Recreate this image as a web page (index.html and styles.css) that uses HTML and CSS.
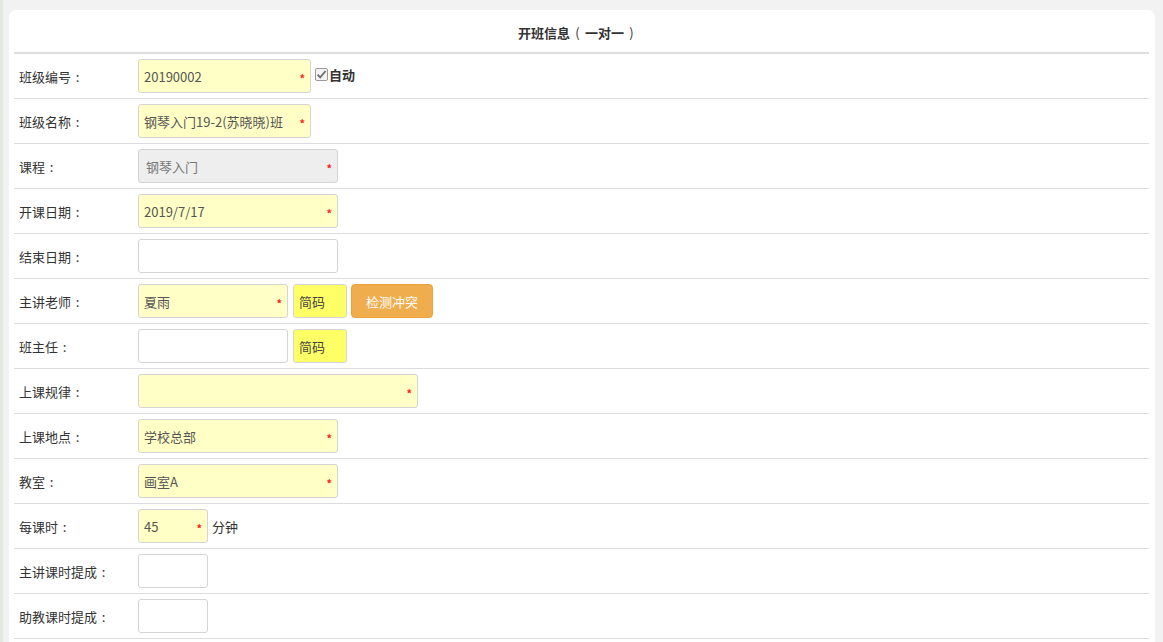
FILE: index.html
```html
<!DOCTYPE html>
<html lang="zh">
<head>
<meta charset="utf-8">
<title>开班信息</title>
<link rel="stylesheet" href="styles.css">
</head>
<body>
<div class="page">
  <div class="card">
    <div class="title">开班信息<span class="p">(</span>一对一<span class="p">)</span></div>

    <div class="row">
      <div class="label">班级编号<span class="p">:</span></div>
      <div class="wrap w173"><input class="field yellow" value="20190002"><span class="req">*</span></div>
      <span class="chk"><svg width="13" height="13" viewBox="0 0 13 13"><rect x="0.5" y="0.5" width="12" height="12" rx="1.5" fill="#f4f4f4" stroke="#9a9a9a"/><path d="M2.6 6.6 L5.2 9.3 L10.6 3" fill="none" stroke="#6f6f6f" stroke-width="1.8"/></svg><b>自动</b></span>
    </div>

    <div class="row">
      <div class="label">班级名称<span class="p">:</span></div>
      <div class="wrap w173"><input class="field yellow" value="钢琴入门19-2(苏晓晓)班"><span class="req">*</span></div>
    </div>

    <div class="row">
      <div class="label">课程<span class="p">:</span></div>
      <div class="wrap w200"><input class="field disabled" value="钢琴入门" disabled><span class="req">*</span></div>
    </div>

    <div class="row">
      <div class="label">开课日期<span class="p">:</span></div>
      <div class="wrap w200"><input class="field yellow" value="2019/7/17"><span class="req">*</span></div>
    </div>

    <div class="row">
      <div class="label">结束日期<span class="p">:</span></div>
      <div class="wrap w200"><input class="field" value=""></div>
    </div>

    <div class="row">
      <div class="label">主讲老师<span class="p">:</span></div>
      <div class="wrap w150"><input class="field yellow" value="夏雨"><span class="req">*</span></div>
      <div class="wrap w54 ml5"><input class="field code" value="简码"></div>
      <button class="btn">检测冲突</button>
    </div>

    <div class="row">
      <div class="label">班主任<span class="p">:</span></div>
      <div class="wrap w150"><input class="field" value=""></div>
      <div class="wrap w54 ml5"><input class="field code" value="简码"></div>
    </div>

    <div class="row">
      <div class="label">上课规律<span class="p">:</span></div>
      <div class="wrap w280"><input class="field yellow" value=""><span class="req">*</span></div>
    </div>

    <div class="row">
      <div class="label">上课地点<span class="p">:</span></div>
      <div class="wrap w200"><input class="field yellow" value="学校总部"><span class="req">*</span></div>
    </div>

    <div class="row">
      <div class="label">教室<span class="p">:</span></div>
      <div class="wrap w200"><input class="field yellow" value="画室A"><span class="req">*</span></div>
    </div>

    <div class="row">
      <div class="label">每课时<span class="p">:</span></div>
      <div class="wrap w70"><input class="field yellow" value="45"><span class="req">*</span></div>
      <span class="unit">分钟</span>
    </div>

    <div class="row">
      <div class="label">主讲课时提成<span class="p">:</span></div>
      <div class="wrap w70"><input class="field" value=""></div>
    </div>

    <div class="row">
      <div class="label">助教课时提成<span class="p">:</span></div>
      <div class="wrap w70"><input class="field" value=""></div>
    </div>
  </div>
</div>
</body>
</html>
```

FILE: styles.css
```css
html, body {
  margin: 0;
  padding: 0;
  background: #f2f2f2;
  height: 100%;
  overflow: hidden;
}
body {
  font-family: "Noto Sans CJK SC", "Open Sans", sans-serif;
  font-size: 13px;
  color: #333;
}
.page {
  border-left: 3px solid #e3e9df;
  padding-top: 10px;
  min-height: 100%;
  box-sizing: border-box;
}
.card {
  margin-left: 6px;
  width: 1146px;
  box-sizing: border-box;
  background: #fff;
  border-radius: 7px 7px 0 0;
  padding: 0 6px 30px 5px;
}
.p {
  display: inline-block;
  width: 13px;
  text-align: center;
}
.title {
  height: 42px;
  line-height: 46px;
  text-align: center;
  font-weight: bold;
  font-size: 13px;
  color: #333;
  border-bottom: 2px solid #dddddd;
  padding-right: 6px;
}
.title .p {
  width: 15px;
  font-weight: normal;
}
.row {
  height: 44px;
  display: flex;
  align-items: center;
  border-bottom: 1px solid #dddddd;
  padding-left: 5px;
}
.label {
  width: 119px;
  flex: none;
  color: #333;
}
.wrap {
  position: relative;
  height: 34px;
  flex: none;
}
.w173 { width: 173px; }
.w200 { width: 200px; }
.w150 { width: 150px; }
.w54 { width: 54px; }
.w280 { width: 280px; }
.w70 { width: 70px; }
.ml5 { margin-left: 5px; }
.field {
  box-sizing: border-box;
  width: 100%;
  height: 34px;
  margin: 0;
  border: 1px solid #d4d4d4;
  border-radius: 3px;
  background: #fff;
  padding: 0 5px;
  font-family: "Noto Sans CJK SC", "Open Sans", sans-serif;
  font-size: 13px;
  color: #555;
  outline: none;
}
.field.yellow { background: #ffffc6; }
.field.disabled { background: #eeeeee; color: #777; padding-left: 7px; }
.field.code { background: #ffff66; color: #444; }
.req {
  position: absolute;
  right: 6px;
  top: 14px;
  color: #ff2020;
  font-size: 11px;
  line-height: 11px;
  font-weight: bold;
}
.chk {
  display: flex;
  align-items: center;
  margin-left: 4px;
  margin-top: -3px;
}
.chk svg { display: block; }
.chk b { font-weight: bold; color: #333; margin-left: 1px; }
.btn {
  margin-left: 4px;
  width: 82px;
  height: 34px;
  box-sizing: border-box;
  border: 1px solid #eea236;
  background: #f0ad4e;
  color: #fff;
  border-radius: 4px;
  font-family: "Noto Sans CJK SC", "Open Sans", sans-serif;
  font-size: 13px;
  padding: 0;
}
.unit {
  margin-left: 4px;
  color: #333;
}
```
